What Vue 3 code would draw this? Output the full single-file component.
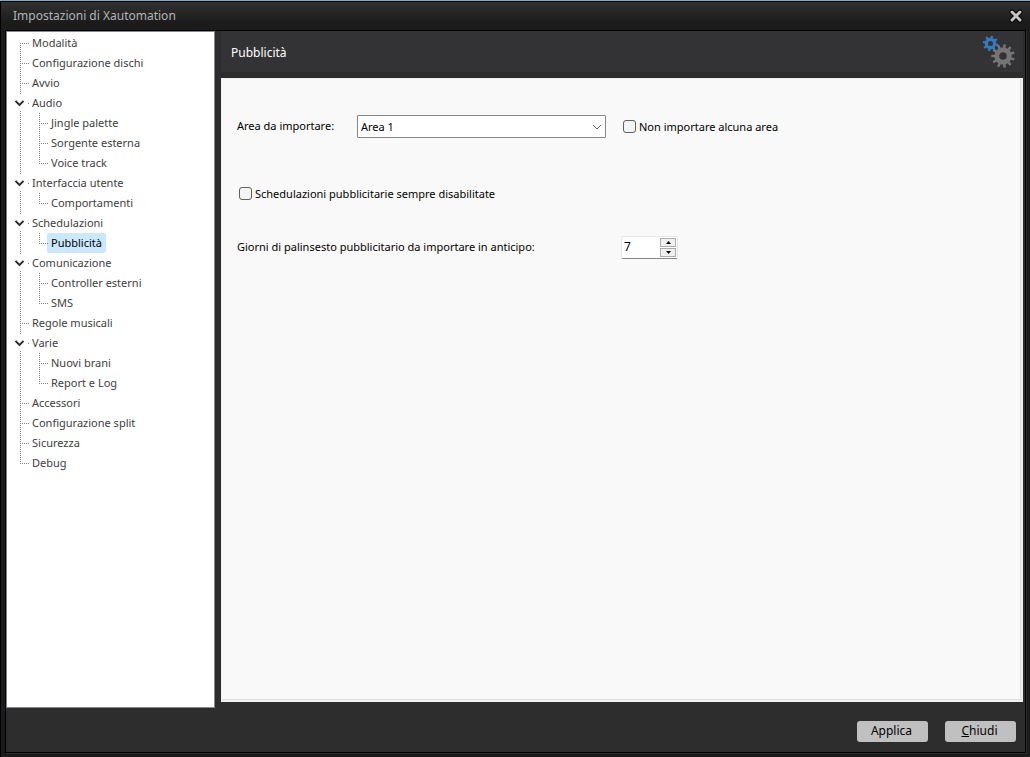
<script setup>
import { ref } from 'vue'

const tree = [
  { label: 'Modalità' },
  { label: 'Configurazione dischi' },
  { label: 'Avvio' },
  { label: 'Audio', children: ['Jingle palette', 'Sorgente esterna', 'Voice track'] },
  { label: 'Interfaccia utente', children: ['Comportamenti'] },
  { label: 'Schedulazioni', children: ['Pubblicità'] },
  { label: 'Comunicazione', children: ['Controller esterni', 'SMS'] },
  { label: 'Regole musicali' },
  { label: 'Varie', children: ['Nuovi brani', 'Report e Log'] },
  { label: 'Accessori' },
  { label: 'Configurazione split' },
  { label: 'Sicurezza' },
  { label: 'Debug' },
]

const selected = ref('Pubblicità')
const area = ref('Area 1')
const noArea = ref(false)
const disabled = ref(false)
const days = ref(7)

// Toothed ring with a round hole, drawn with the even-odd fill rule.
function gear(cx, cy, outer, root, hole, teeth) {
  const step = (Math.PI * 2) / teeth
  const at = (r, a) => `${(cx + r * Math.cos(a)).toFixed(2)} ${(cy + r * Math.sin(a)).toFixed(2)}`
  const points = []
  for (let i = 0; i < teeth; i++) {
    const a = i * step - Math.PI / 2 + step / 4
    points.push(at(root, a - step * 0.27), at(outer, a - step * 0.18), at(outer, a + step * 0.18), at(root, a + step * 0.27))
  }
  return `M${points.join('L')}Z M${cx - hole} ${cy}a${hole} ${hole} 0 1 0 ${hole * 2} 0a${hole} ${hole} 0 1 0 ${-hole * 2} 0Z`
}
const blueGear = gear(8.5, 8.5, 7.8, 5.8, 2.5, 8)
const grayGear = gear(21, 21, 11.8, 8.6, 3.8, 11)
</script>

<template>
  <div class="window">
    <header class="titlebar">
      <h1 class="title">Impostazioni di Xautomation</h1>
      <button class="close" type="button" aria-label="Chiudi finestra">
        <svg width="16" height="16" viewBox="0 0 16 16">
          <path d="M4 4L12 12M12 4L4 12" stroke="#000" stroke-width="5" stroke-linecap="round" />
          <path d="M4 4L12 12M12 4L4 12" stroke="#c4c4c4" stroke-width="3" stroke-linecap="round" />
        </svg>
      </button>
    </header>

    <div class="client">
      <div class="body">
        <nav class="tree">
          <ul class="roots">
            <li v-for="node in tree" :key="node.label" class="node">
              <div class="row">
                <button v-if="node.children" class="toggle" type="button" :aria-label="'Comprimi ' + node.label">
                  <svg width="9" height="7" viewBox="0 0 9 7">
                    <path d="M0.500 1L4.500 5L8.500 1" fill="none" stroke="#262626" stroke-width="1.8" />
                  </svg>
                </button>
                <a href="#" class="item" :class="{ active: selected === node.label }" @click.prevent="selected = node.label">{{ node.label }}</a>
              </div>
              <ul v-if="node.children" class="children">
                <li v-for="child in node.children" :key="child" class="leaf">
                  <a href="#" class="item" :class="{ active: selected === child }" @click.prevent="selected = child">{{ child }}</a>
                </li>
              </ul>
            </li>
          </ul>
        </nav>

        <main class="main">
          <div class="banner">
            <h2 class="heading">Pubblicità</h2>
            <svg class="gears" width="34" height="34" viewBox="0 0 34 34">
              <path :d="blueGear" fill="#3578bb" fill-rule="evenodd" />
              <path :d="grayGear" fill="#757575" fill-rule="evenodd" />
            </svg>
          </div>
          <form class="panel" @submit.prevent>
            <div class="field">
              <label class="area-label" for="area">Area da importare:</label>
              <span class="combo">
                <select id="area" v-model="area">
                  <option>Area 1</option>
                </select>
                <svg class="arrow" width="10" height="6" viewBox="0 0 10 6">
                  <path d="M1 1L5 5L9 1" fill="none" stroke="#606060" />
                </svg>
              </span>
              <label class="check">
                <input v-model="noArea" type="checkbox" />Non importare alcuna area
              </label>
            </div>
            <div class="field disable">
              <label class="check">
                <input v-model="disabled" type="checkbox" />Schedulazioni pubblicitarie sempre disabilitate
              </label>
            </div>
            <div class="field">
              <label class="days-label" for="days">Giorni di palinsesto pubblicitario da importare in anticipo:</label>
              <span class="spinner">
                <input id="days" v-model="days" type="number" min="0" />
                <span class="steps">
                  <button type="button" aria-label="Aumenta" @click="days++">
                    <svg width="5" height="3" viewBox="0 0 5 3"><path d="M0 3L2.500 0L5 3Z" /></svg>
                  </button>
                  <button type="button" aria-label="Diminuisci" @click="days--">
                    <svg width="5" height="3" viewBox="0 0 5 3"><path d="M0 0L2.500 3L5 0Z" /></svg>
                  </button>
                </span>
              </span>
            </div>
          </form>
        </main>
      </div>

      <footer class="footer">
        <button class="action" type="button">Applica</button>
        <button class="action" type="button"><u>C</u>hiudi</button>
      </footer>
    </div>
  </div>
</template>

<style>
body {
  margin: 0;
  background: #1b1b1b;
}
</style>

<style scoped>
.window {
  box-sizing: border-box;
  min-height: 100vh;
  display: flex;
  flex-direction: column;
  padding: 0 4px 4px 5px;
  border-top: 1px solid #7fa9c4;
  background: #1b1b1b;
  box-shadow: inset 1px 1px 0 #000;
  font-family: "Noto Sans", "Open Sans", sans-serif;
  font-size: 11px;
  line-height: 20px;
  color: #000;
}
.window *, .window *::before, .window *::after {
  box-sizing: border-box;
}
button, input, select {
  font: inherit;
  color: inherit;
  margin: 0;
  padding: 0;
}
ul {
  list-style: none;
  margin: 0;
  padding: 0;
}
.titlebar {
  height: 29px;
  margin: 0 -4px 0 -5px;
  padding: 0 6px 0 13px;
  display: flex;
  align-items: center;
  justify-content: space-between;
  background: linear-gradient(#323232, #1b1b1b 75%);
  box-shadow: inset 1px 1px 0 #000;
}
.title {
  margin: 0;
  font-size: 12px;
  font-weight: 400;
  color: #b4b4b4;
}
.close {
  width: 16px;
  height: 16px;
  display: flex;
  border: 0;
  background: none;
}
.client {
  flex: 1;
  display: flex;
  flex-direction: column;
  border: 1px solid #000;
  box-shadow: 1px 1px 0 #2e2e2e;
  background: #2d2d2d;
}
.body {
  flex: 1;
  display: flex;
  gap: 6px;
}
.tree {
  width: 209px;
  flex: none;
  border: 1px solid #828790;
  background: #fff;
  padding: 1px 0 0 6px;
  color: #404040;
}
.node {
  position: relative;
}
.row {
  display: flex;
  align-items: center;
  height: 20px;
  padding-left: 15px;
}
.item {
  display: block;
  height: 20px;
  padding: 0 4px;
  border-radius: 2px;
  color: inherit;
  text-decoration: none;
  white-space: nowrap;
}
.item.active {
  background: #cce8ff;
  color: #000;
}
.node::before, .leaf::before {
  content: "";
  position: absolute;
  top: 0;
  bottom: 0;
  left: 7px;
  width: 1px;
  background: repeating-linear-gradient(#808080 0 1px, transparent 1px 2px);
}
.node:first-child::before {
  top: 10px;
}
.node:last-child::before, .leaf:last-child::before {
  bottom: 9px;
}
.node::after, .leaf::after {
  content: "";
  position: absolute;
  top: 10px;
  left: 7px;
  width: 9px;
  height: 1px;
  background: repeating-linear-gradient(90deg, #808080 0 1px, transparent 1px 2px);
}
.toggle {
  position: absolute;
  z-index: 1;
  left: 0;
  top: 2px;
  width: 14px;
  height: 16px;
  padding-right: 1px;
  display: flex;
  align-items: center;
  justify-content: center;
  border: 0;
  background: #fff;
}
.children {
  padding-left: 19px;
}
.leaf {
  position: relative;
  display: flex;
  padding-left: 15px;
}
.main {
  flex: 1;
  display: flex;
  flex-direction: column;
  margin-bottom: 6px;
  margin-right: 2px;
}
.banner {
  height: 41px;
  margin-bottom: 6px;
  padding: 1px 7px 0 10px;
  display: flex;
  align-items: center;
  justify-content: space-between;
  background: #333335;
}
.heading {
  margin: 0;
  padding-top: 2px;
  font-size: 12px;
  font-weight: 400;
  color: #fff;
}
.panel {
  flex: 1;
  display: flex;
  flex-direction: column;
  padding: 36px 16px 16px 15px;
  background: #f9f9f9;
  border: 1px solid #f0f0f0;
  border-width: 1px 2px 2px 1px;
  box-shadow: inset -1px -1px 0 #e0e0e0;
}
.field {
  display: flex;
  align-items: center;
  height: 23px;
  white-space: nowrap;
}
.area-label, .days-label {
  padding-bottom: 2px;
}
.area-label {
  width: 120px;
}
.days-label {
  width: 384px;
}
.combo {
  position: relative;
  display: flex;
  width: 249px;
  height: 23px;
  margin-right: 17px;
}
.combo select {
  appearance: none;
  width: 100%;
  padding: 0 24px 0 3px;
  border: 1px solid #858585;
  border-radius: 1px;
  background: #fff;
}
.arrow {
  position: absolute;
  right: 4px;
  top: 9px;
  pointer-events: none;
}
.check {
  display: flex;
  align-items: center;
  gap: 3px;
}
.check input {
  appearance: none;
  width: 13px;
  height: 13px;
  border: 1px solid #606060;
  border-radius: 3px;
  background: #f4f4f4;
}
.check input:checked {
  background: #0067c0;
}
.disable {
  margin: 44px 0 31px 2px;
}
.spinner {
  display: flex;
  width: 57px;
  height: 23px;
  padding: 1px;
  border: 1px solid #e6e6e6;
  border-bottom-color: #868686;
  border-radius: 2px;
  background: #fff;
}
.spinner input {
  appearance: textfield;
  flex: 1;
  min-width: 0;
  padding: 0 0 2px 1px;
  border: 0;
  background: none;
  font-size: 12px;
}
.steps {
  width: 16px;
  display: grid;
  grid-template-rows: 1fr 1fr;
  gap: 1px;
}
.steps button {
  display: flex;
  align-items: center;
  justify-content: center;
  border: 1px solid #adadad;
  background: #f0f0f0;
}
.footer {
  height: 44px;
  padding: 13px 9px 0 0;
  display: flex;
  justify-content: flex-end;
  gap: 17px;
}
.action {
  width: 71px;
  height: 21px;
  padding: 0 2px 2px 0;
  border: 0;
  border-radius: 3px;
  background: #c0c0c0;
  font-size: 12px;
  line-height: 19px;
}
</style>
